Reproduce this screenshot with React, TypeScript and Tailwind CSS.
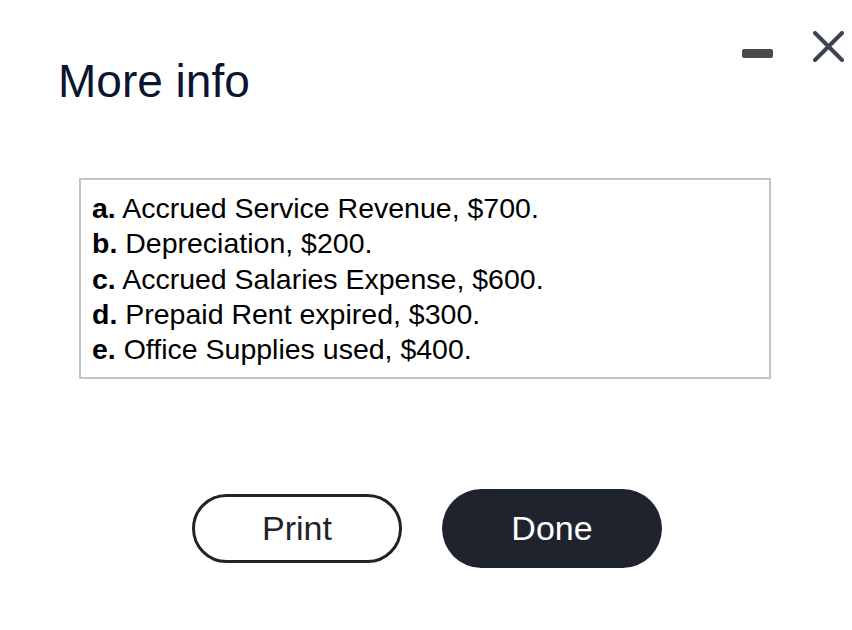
export default function App() {
  const items = [
    { label: "a.", text: "Accrued Service Revenue, $700." },
    { label: "b.", text: "Depreciation, $200." },
    { label: "c.", text: "Accrued Salaries Expense, $600." },
    { label: "d.", text: "Prepaid Rent expired, $300." },
    { label: "e.", text: "Office Supplies used, $400." },
  ];

  return (
    <div className="w-[852px] h-[630px] bg-white font-['Liberation_Sans',Arial,sans-serif] flex flex-col">
      {/* window controls */}
      <div className="flex justify-end items-center h-[31px] pr-[8px] gap-[40px] mt-[31px]">
        <div className="w-[31px] h-[9px] rounded-[2px] bg-[#4b4b4b] mt-[13px]" />
        <svg width="31" height="31" viewBox="0 0 31 31">
          <path d="M2 2 L29 29 M29 2 L2 29" stroke="#3b4450" strokeWidth="4" strokeLinecap="round" />
        </svg>
      </div>

      <h1 className="pl-[58px] -mt-[4px] text-[46px] leading-[46px] text-[#0b1530]">More info</h1>

      <div className="ml-[79px] mt-[74px] w-[692px] border-2 border-[#c4c4c4] pl-[11px] pt-[11px] pb-[10px] text-[28.5px] leading-[35.3px] text-black">
        {items.map((item) => (
          <div key={item.label}>
            <span className="font-bold">{item.label}</span> {item.text}
          </div>
        ))}
      </div>

      <div className="flex items-center mt-[110px] pl-[187px] gap-[35px]">
        <button className="w-[220px] h-[79px] rounded-full border-[5px] border-white flex items-center justify-center">
          <span className="w-full h-full rounded-full border-[3px] border-[#1f232b] flex items-center justify-center text-[34px] text-[#1f232b]">
            Print
          </span>
        </button>
        <button className="w-[220px] h-[79px] rounded-full bg-[#1f232e] text-white text-[34px] flex items-center justify-center">
          Done
        </button>
      </div>
    </div>
  );
}
